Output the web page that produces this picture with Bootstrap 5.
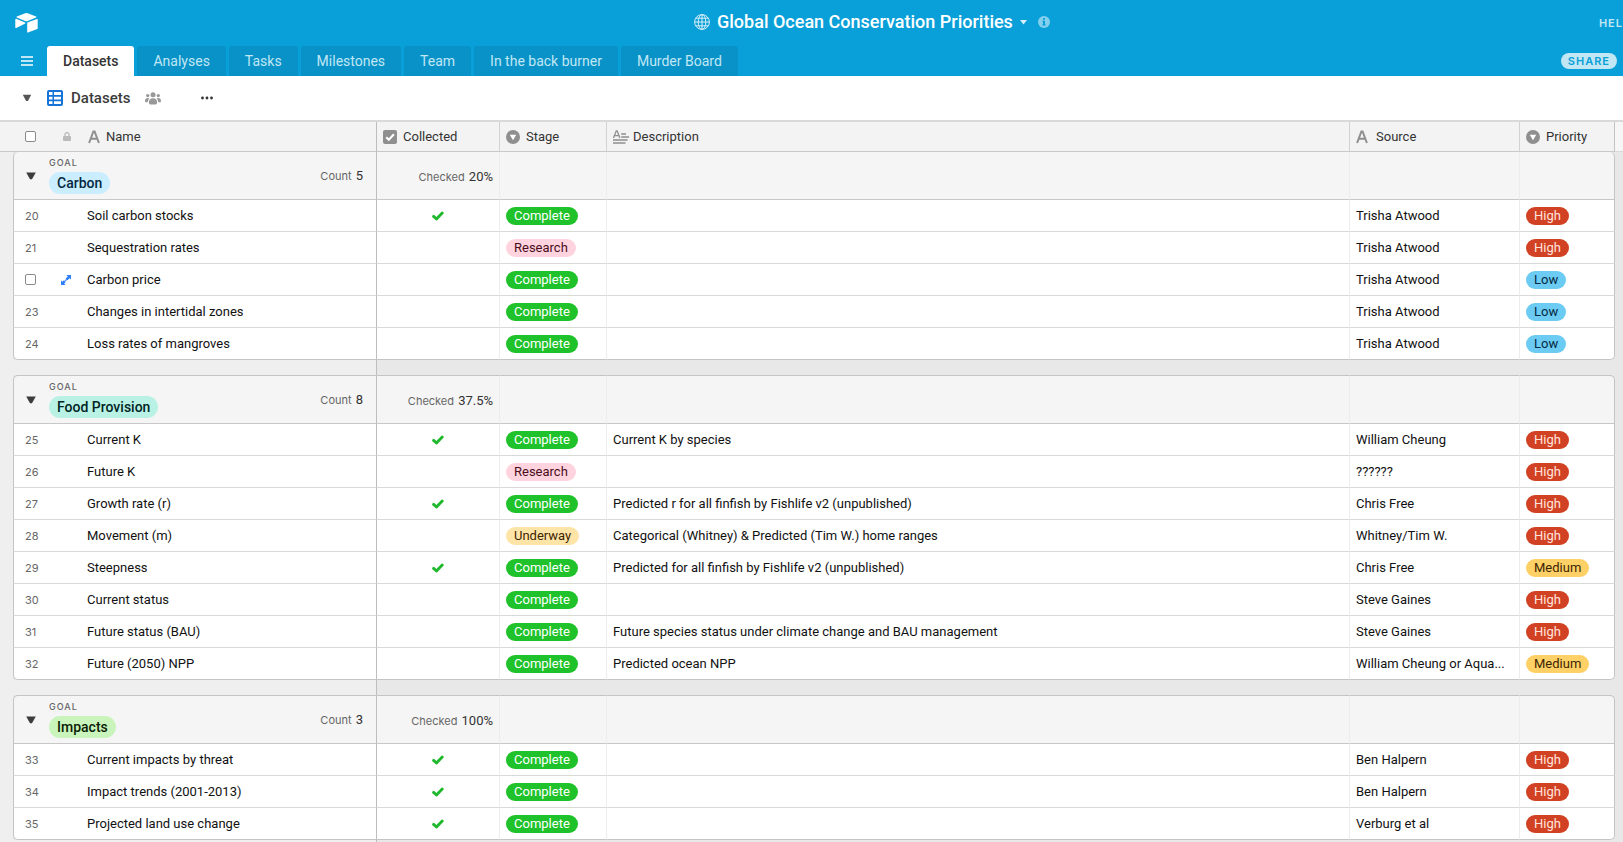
<!DOCTYPE html>
<html lang="en">
<head>
<meta charset="utf-8">
<meta name="viewport" content="width=device-width, initial-scale=1">
<title>Global Ocean Conservation Priorities</title>
<link href="https://cdn.jsdelivr.net/npm/bootstrap@5.3.0/dist/css/bootstrap.min.css" rel="stylesheet">
<style>
  body { font-family: Roboto, "Liberation Sans", sans-serif; font-size: 13px; line-height: 18px; color: #111; background: #e8e8e8; }
  svg { display: block; flex: none; }
  button { border: 0; background: none; padding: 0; color: inherit; font: inherit; }

  .topbar { background: #099fd8; color: #fff; }
  .title-row { height: 46px; }
  .title-row .base-title { font-size: 18px; line-height: 24px; font-weight: 500; }
  .base-name { padding-left: 107px; padding-bottom: 2px; gap: 7px; }
  .caps { font-family: Inter, "Liberation Sans", sans-serif; font-size: 11px; line-height: 16px; font-weight: 600; letter-spacing: 1px; }
  .soft { color: #c1e7f5; }
  .tab-row { height: 30px; padding-left: 21px; padding-right: 6px; }
  .tab-row .nav { gap: 3px; margin-left: 14px; }
  .tab-row .nav-link { height: 30px; padding: 4px 16px; font-size: 14px; line-height: 22px; color: #c1e7f5; background: #0892c7; border-radius: 3px 3px 0 0; white-space: nowrap; }
  .tab-row .nav-link.active { color: #333; background: #fff; font-weight: 500; }
  .share { background: #c1e7f5; color: #099fd8; padding: 0 7px; }

  .viewbar { height: 44px; padding: 0 22px; background: #fff; color: #333; }
  .view-name { font-size: 15px; font-weight: 500; color: #3c3c3c; margin: 0 15px 0 8px; }

  .grid-table { width: 100%; table-layout: fixed; border-collapse: separate; border-spacing: 0; border-top: 2px solid #d9d9d9; }
  .grid-table th, .grid-table td { padding: 0 6px; overflow: hidden; white-space: nowrap; text-overflow: ellipsis; vertical-align: middle; font-weight: 400; border-right: 1px solid #ededed; border-bottom: 1px solid #d9d9d9; background: #fff; }
  .grid-table thead th { height: 30px; background: #f3f3f3; border-right-color: #d0d3d3; border-bottom-color: #c8c8c8; color: #333; }
  .grid-table thead th.flat, .grid-table thead th.pad { border-right: 0; }
  .field { display: flex; align-items: center; gap: 6px; }
  .grid-table .pad { padding: 0; border: 0; background: #e8e8e8; }
  .grid-table tbody .pad:first-child { background: #efefef; }
  .grid-table thead .pad { border-bottom: 1px solid #c8c8c8; background: #f3f3f3; }
  .grid-table thead .pad:last-child { background: #f6f6f6; border-bottom-color: #d9d9d9; }
  .grid-table tbody th { height: 32px; text-align: left; padding-left: 0; border-right-color: #bdbdbd; }
  .grid-table tbody .num { padding: 0 0 0 11px; color: #666; font-family: Inter, "Liberation Sans", sans-serif; font-size: 11px; border-left: 1px solid #c4c4c4; border-right: 0; }
  .grid-table thead .locked { border-right-color: #bdbdbd; }
  .grid-table .edge { border-right-color: #c4c4c4; }
  .group-head th, .group-head td { height: 48px !important; background: #f5f5f5 !important; border-bottom-color: #c8c8c8 !important; }
  .group-head .pad:last-child { background: #e8e8e8 !important; border: 0 !important; }
  .group-head .pad:first-child { background: #efefef !important; border: 0 !important; }
  .group-head .group-cell { padding: 1px 13px 0 12px; border-left: 1px solid #c4c4c4; }
  .group-head td.text-end { padding-top: 3px; }
  .grid-table .ruled th:not(.pad), .grid-table .ruled td:not(.pad) { height: 49px !important; border-top: 1px solid #c4c4c4; }
  .ruled .group-cell, .first-head .group-cell { border-top-left-radius: 5px; }
  .ruled .edge, .first-head .edge { border-top-right-radius: 5px; }
  .group-end th:not(.pad), .group-end td:not(.pad) { border-bottom-color: #c4c4c4 !important; }
  .group-end .num { border-bottom-left-radius: 5px; }
  .group-end .edge { border-bottom-right-radius: 5px; }
  .grid-table .gap-row td { height: 15px; padding: 0; border: 0; background: #e8e8e8; }
  .grid-table .gap-row td:first-child { background: #efefef; border-right: 1px solid #bdbdbd; }
  .goal { font-family: Inter, "Liberation Sans", sans-serif; font-size: 9px; line-height: 10px; font-weight: 500; letter-spacing: 1px; color: #666; margin-bottom: 4px; }
  .goal-box { margin-left: 13px; }
  .goal-pill { font-size: 14px; line-height: 22px; font-weight: 500; padding: 0 8px; border-radius: 11px; }
  .stat { font-family: Inter, "Liberation Sans", sans-serif; font-size: 11px; color: #666; }
  .stat b { font-family: Roboto, "Liberation Sans", sans-serif; font-size: 13px; font-weight: 400; color: #333; margin-left: 1px; }
  .pill { display: block; width: fit-content; height: 18px; line-height: 18px; padding: 0 8px; border-radius: 9px; }
  .complete { background: #20c22c; color: #fff; }
  .research { background: #ffd4de; color: #4c0c1c; }
  .underway { background: #ffe4a8; color: #3b2501; }
  .high { background: #d14123; color: #ffe5de; }
  .low { background: #6bcbf2; color: #04283f; }
  .medium { background: #ffd066; color: #3b2501; }
  .box { appearance: none; display: block; flex: none; margin: 0; width: 11px; height: 11px; border: 1px solid #8a8a8a; border-radius: 2px; background: #fff; }
</style>
</head>
<body class="vh-100 overflow-hidden d-flex flex-column">

<!-- shared icons -->
<svg width="0" height="0" class="position-absolute" aria-hidden="true">
  <symbol id="check" viewBox="0 0 12 10"><path d="M1.6 5.4 4.5 8 10.2 2" fill="none" stroke="#20b92c" stroke-width="2.9" stroke-linejoin="round" stroke-linecap="round"/></symbol>
  <symbol id="caret" viewBox="0 0 10 8"><path d="M.2.5h9.600L6 7.200H4z" fill="#3c3c3c"/></symbol>
  <symbol id="letter" viewBox="0 0 12 14"><path d="M1.1 13 5.4 1.4h1.2L10.9 13M2.8 8.8h6.4" fill="none" stroke="#8f8f8f" stroke-width="2"/></symbol>
  <symbol id="select" viewBox="0 0 14 14"><circle cx="7" cy="7" r="7" fill="#8f8f8f"/><path d="M3.8 4.8h6.4L7 10.2z" fill="#fff"/></symbol>
</svg>

<header class="topbar flex-shrink-0">
  <div class="title-row d-flex align-items-center">
    <a href="#" aria-label="Home" style="margin-left:15px">
      <svg width="23" height="20" viewBox="0 0 23 20" fill="#fff"><path d="M10.2.3a3.4 3.4 0 0 1 2.5 0l8.4 3.3c.5.2.5.8 0 1l-8.3 3.3a3.700 3.700 0 0 1-2.700 0L1.800 4.600c-.5-.2-.5-.8 0-1z"/><path d="M12.200 10.200v8.900c0 .4.400.7.800.5l9.300-3.600c.3-.1.400-.3.400-.5V6.500c0-.4-.4-.7-.8-.5l-9.300 3.600c-.2.100-.4.300-.4.600z"/><path d="M10.100 10.600 7.400 12l-6.200 3C.8 15.200.3 14.900.3 14.500V6.400c0-.5.500-.8.900-.6l8.800 3.600c.5.200.6.900.1 1.200z"/></svg>
    </a>
    <div class="base-name flex-grow-1 d-flex justify-content-center align-items-center">
      <svg width="16" height="16" viewBox="0 0 16 16" fill="none" stroke="#d6effa" stroke-width="1"><circle cx="8" cy="8" r="7.400"/><ellipse cx="8" cy="8" rx="3.800" ry="7.400"/><path d="M8 .6v14.800M.6 8h14.800M1.800 4.200h12.400M1.800 11.800h12.400"/></svg>
      <h1 class="base-title m-0">Global Ocean Conservation Priorities</h1>
      <button type="button" aria-label="Base menu"><svg width="7" height="5" viewBox="0 0 7 5"><path d="M0 0h7L3.500 4.500z" fill="#d6effa"/></svg></button>
      <button type="button" aria-label="Base information"><svg class="ms-1" width="12" height="12" viewBox="0 0 12 12"><circle cx="6" cy="6" r="6" fill="#84cfec"/><path d="M5 2h2v1.700H5zM4.500 4.800H7v3.600h.7v1.100H4.400V8.400H5V5.900h-.5z" fill="#099fd8"/></svg></button>
    </div>
    <a href="#" class="caps soft text-decoration-none">HEL</a>
  </div>
  <div class="tab-row d-flex align-items-center">
    <button type="button" aria-label="All tables"><svg width="12" height="10" viewBox="0 0 12 10"><path d="M0 1h12M0 5h12M0 9h12" stroke="#c1e7f5" stroke-width="2"/></svg></button>
    <nav class="nav flex-nowrap" aria-label="Tables">
      <a class="nav-link active" href="#" aria-current="page">Datasets</a>
      <a class="nav-link" href="#">Analyses</a>
      <a class="nav-link" href="#">Tasks</a>
      <a class="nav-link" href="#">Milestones</a>
      <a class="nav-link" href="#">Team</a>
      <a class="nav-link" href="#">In the back burner</a>
      <a class="nav-link" href="#">Murder Board</a>
    </nav>
    <button type="button" class="share caps rounded-pill ms-auto">SHARE</button>
  </div>
</header>

<div class="viewbar flex-shrink-0 d-flex align-items-center">
  <button type="button" aria-label="Toggle views"><svg width="10" height="8" viewBox="0 0 10 8"><path d="M.8.700h8.400L5.900 7H4.100z" fill="#555"/></svg></button>
  <svg width="16" height="16" viewBox="0 0 16 16" style="margin-left:15px"><rect width="16" height="16" rx="2" fill="#1573d8"/><path d="M2 2h3.500v3H2zM7 2h7v3H7zM2 6.700h3.500v2.900H2zM7 6.700h7v2.900H7zM2 11.200h3.500v2.800H2zM7 11.200h7v2.800H7z" fill="#fff"/></svg>
  <h2 class="view-name mb-0">Datasets</h2>
  <svg width="16" height="13" viewBox="0 0 16 13" fill="#999"><circle cx="8" cy="2.800" r="2.500"/><circle cx="2.700" cy="3.600" r="1.700"/><circle cx="13.300" cy="3.600" r="1.700"/><path d="M3.900 10.300C3.900 7.600 5.600 6.200 8 6.200s4.100 1.400 4.100 4.100c0 1.300-.5 2.200-1.300 2.200H5.200c-.8 0-1.300-.9-1.300-2.200zM0 8.800c0-1.800 1-2.800 2.700-2.800.8 0 1.400.2 1.800.6-1 .9-1.600 2.100-1.700 3.700H1c-.7 0-1-.6-1-1.500zM16 8.800c0-1.800-1-2.800-2.700-2.800-.8 0-1.400.2-1.800.6 1 .9 1.600 2.100 1.700 3.700H15c.7 0 1-.6 1-1.500z"/></svg>
  <button type="button" aria-label="More options" style="margin-left:40px"><svg width="12" height="4" viewBox="0 0 12 4" fill="#333"><circle cx="1.500" cy="2" r="1.400"/><circle cx="6" cy="2" r="1.400"/><circle cx="10.500" cy="2" r="1.400"/></svg></button>
</div>

<main class="flex-grow-1 overflow-hidden">
<table class="grid-table">
  <colgroup><col style="width:13px"><col style="width:74px"><col style="width:290px"><col style="width:123px"><col style="width:107px"><col><col style="width:170px"><col style="width:95px"><col style="width:8px"></colgroup>
  <thead>
    <tr>
      <th class="pad"></th>
      <th class="flat ps-0"><div class="d-flex align-items-center" style="padding-left:12px"><input class="box" type="checkbox" aria-label="Select all"><svg width="8" height="9" viewBox="0 0 8 9" style="margin-left:27px"><rect y="4" width="8" height="5" rx="1" fill="#bbb"/><path d="M2 4V2.600a2 2 0 0 1 4 0V4" fill="none" stroke="#bbb" stroke-width="1.300"/></svg></div></th>
      <th class="locked ps-0" scope="col"><div class="field" style="padding-left:1px"><svg width="12" height="14"><use href="#letter"/></svg>Name</div></th>
      <th scope="col"><div class="field"><svg width="14" height="14" viewBox="0 0 14 14"><rect width="14" height="14" rx="2" fill="#8f8f8f"/><path d="M3.200 7.200 5.800 9.700 10.900 4.200" fill="none" stroke="#fff" stroke-width="2"/></svg>Collected</div></th>
      <th scope="col"><div class="field"><svg width="14" height="14"><use href="#select"/></svg>Stage</div></th>
      <th scope="col"><div class="field gap-1"><svg width="16" height="14" viewBox="0 0 16 14" fill="none" stroke="#8f8f8f"><path d="M.5 8 3.300.8h.8L6.900 8M1.500 5.600h4.400" stroke-width="1.300"/><path d="M8.200 4H13M8.200 7H16M0 10h14.500M0 13h12.500" stroke-width="1.600"/></svg>Description</div></th>
      <th scope="col"><div class="field gap-2"><svg width="12" height="14"><use href="#letter"/></svg>Source</div></th>
      <th class="edge" scope="col"><div class="field"><svg width="14" height="14"><use href="#select"/></svg>Priority</div></th>
      <th class="pad"></th>
    </tr>
  </thead>

  <tbody>
    <tr class="group-head first-head">
      <td class="pad"></td>
      <th class="group-cell" colspan="2" scope="rowgroup"><div class="d-flex align-items-center"><button type="button" aria-label="Collapse Carbon"><svg width="10" height="8"><use href="#caret"/></svg></button><div class="goal-box d-flex flex-column align-items-start"><span class="goal">GOAL</span><span class="goal-pill" style="background:#caedff;color:#04283f">Carbon</span></div><span class="stat ms-auto">Count <b>5</b></span></div></th>
      <td class="text-end"><span class="stat">Checked <b>20%</b></span></td><td></td><td></td><td></td><td class="edge"></td><td class="pad"></td>
    </tr>
    <tr><td class="pad"></td><td class="num">20</td><th scope="row">Soil carbon stocks</th><td><svg class="mx-auto" width="12" height="10" role="img" aria-label="Collected"><use href="#check"/></svg></td><td><span class="pill complete">Complete</span></td><td></td><td>Trisha Atwood</td><td class="edge"><span class="pill high">High</span></td><td class="pad"></td></tr>
    <tr><td class="pad"></td><td class="num">21</td><th scope="row">Sequestration rates</th><td></td><td><span class="pill research">Research</span></td><td></td><td>Trisha Atwood</td><td class="edge"><span class="pill high">High</span></td><td class="pad"></td></tr>
    <tr><td class="pad"></td><td class="num"><div class="d-flex align-items-center"><input class="box" type="checkbox" aria-label="Select Carbon price"><button type="button" aria-label="Expand record" style="margin-left:25px"><svg width="10" height="10" viewBox="0 0 10 10" fill="#2d7ff9"><path d="M5.500 0H10v4.500L8.600 3.200 6.500 5.300 4.700 3.500 6.800 1.400zM4.500 10H0V5.500l1.400 1.300 1.500-1.500 1.800 1.800-1.500 1.500z"/><path d="m3.500 5.500 2-2 1 1-2 2z" opacity=".8"/></svg></button></div></td><th scope="row">Carbon price</th><td></td><td><span class="pill complete">Complete</span></td><td></td><td>Trisha Atwood</td><td class="edge"><span class="pill low">Low</span></td><td class="pad"></td></tr>
    <tr><td class="pad"></td><td class="num">23</td><th scope="row">Changes in intertidal zones</th><td></td><td><span class="pill complete">Complete</span></td><td></td><td>Trisha Atwood</td><td class="edge"><span class="pill low">Low</span></td><td class="pad"></td></tr>
    <tr class="group-end"><td class="pad"></td><td class="num">24</td><th scope="row">Loss rates of mangroves</th><td></td><td><span class="pill complete">Complete</span></td><td></td><td>Trisha Atwood</td><td class="edge"><span class="pill low">Low</span></td><td class="pad"></td></tr>
    <tr class="gap-row"><td colspan="3"></td><td colspan="6"></td></tr>
  </tbody>

  <tbody>
    <tr class="group-head ruled">
      <td class="pad"></td>
      <th class="group-cell" colspan="2" scope="rowgroup"><div class="d-flex align-items-center"><button type="button" aria-label="Collapse Food Provision"><svg width="10" height="8"><use href="#caret"/></svg></button><div class="goal-box d-flex flex-column align-items-start"><span class="goal">GOAL</span><span class="goal-pill" style="background:#b9f2e5;color:#012524">Food Provision</span></div><span class="stat ms-auto">Count <b>8</b></span></div></th>
      <td class="text-end"><span class="stat">Checked <b>37.5%</b></span></td><td></td><td></td><td></td><td class="edge"></td><td class="pad"></td>
    </tr>
    <tr><td class="pad"></td><td class="num">25</td><th scope="row">Current K</th><td><svg class="mx-auto" width="12" height="10" role="img" aria-label="Collected"><use href="#check"/></svg></td><td><span class="pill complete">Complete</span></td><td>Current K by species</td><td>William Cheung</td><td class="edge"><span class="pill high">High</span></td><td class="pad"></td></tr>
    <tr><td class="pad"></td><td class="num">26</td><th scope="row">Future K</th><td></td><td><span class="pill research">Research</span></td><td></td><td>??????</td><td class="edge"><span class="pill high">High</span></td><td class="pad"></td></tr>
    <tr><td class="pad"></td><td class="num">27</td><th scope="row">Growth rate (r)</th><td><svg class="mx-auto" width="12" height="10" role="img" aria-label="Collected"><use href="#check"/></svg></td><td><span class="pill complete">Complete</span></td><td>Predicted r for all finfish by Fishlife v2 (unpublished)</td><td>Chris Free</td><td class="edge"><span class="pill high">High</span></td><td class="pad"></td></tr>
    <tr><td class="pad"></td><td class="num">28</td><th scope="row">Movement (m)</th><td></td><td><span class="pill underway">Underway</span></td><td>Categorical (Whitney) &amp; Predicted (Tim W.) home ranges</td><td>Whitney/Tim W.</td><td class="edge"><span class="pill high">High</span></td><td class="pad"></td></tr>
    <tr><td class="pad"></td><td class="num">29</td><th scope="row">Steepness</th><td><svg class="mx-auto" width="12" height="10" role="img" aria-label="Collected"><use href="#check"/></svg></td><td><span class="pill complete">Complete</span></td><td>Predicted for all finfish by Fishlife v2 (unpublished)</td><td>Chris Free</td><td class="edge"><span class="pill medium">Medium</span></td><td class="pad"></td></tr>
    <tr><td class="pad"></td><td class="num">30</td><th scope="row">Current status</th><td></td><td><span class="pill complete">Complete</span></td><td></td><td>Steve Gaines</td><td class="edge"><span class="pill high">High</span></td><td class="pad"></td></tr>
    <tr><td class="pad"></td><td class="num">31</td><th scope="row">Future status (BAU)</th><td></td><td><span class="pill complete">Complete</span></td><td>Future species status under climate change and BAU management</td><td>Steve Gaines</td><td class="edge"><span class="pill high">High</span></td><td class="pad"></td></tr>
    <tr class="group-end"><td class="pad"></td><td class="num">32</td><th scope="row">Future (2050) NPP</th><td></td><td><span class="pill complete">Complete</span></td><td>Predicted ocean NPP</td><td>William Cheung or Aqua...</td><td class="edge"><span class="pill medium">Medium</span></td><td class="pad"></td></tr>
    <tr class="gap-row"><td colspan="3"></td><td colspan="6"></td></tr>
  </tbody>

  <tbody>
    <tr class="group-head ruled">
      <td class="pad"></td>
      <th class="group-cell" colspan="2" scope="rowgroup"><div class="d-flex align-items-center"><button type="button" aria-label="Collapse Impacts"><svg width="10" height="8"><use href="#caret"/></svg></button><div class="goal-box d-flex flex-column align-items-start"><span class="goal">GOAL</span><span class="goal-pill" style="background:#c9f5bd;color:#0b1d05">Impacts</span></div><span class="stat ms-auto">Count <b>3</b></span></div></th>
      <td class="text-end"><span class="stat">Checked <b>100%</b></span></td><td></td><td></td><td></td><td class="edge"></td><td class="pad"></td>
    </tr>
    <tr><td class="pad"></td><td class="num">33</td><th scope="row">Current impacts by threat</th><td><svg class="mx-auto" width="12" height="10" role="img" aria-label="Collected"><use href="#check"/></svg></td><td><span class="pill complete">Complete</span></td><td></td><td>Ben Halpern</td><td class="edge"><span class="pill high">High</span></td><td class="pad"></td></tr>
    <tr><td class="pad"></td><td class="num">34</td><th scope="row">Impact trends (2001-2013)</th><td><svg class="mx-auto" width="12" height="10" role="img" aria-label="Collected"><use href="#check"/></svg></td><td><span class="pill complete">Complete</span></td><td></td><td>Ben Halpern</td><td class="edge"><span class="pill high">High</span></td><td class="pad"></td></tr>
    <tr class="group-end"><td class="pad"></td><td class="num">35</td><th scope="row">Projected land use change</th><td><svg class="mx-auto" width="12" height="10" role="img" aria-label="Collected"><use href="#check"/></svg></td><td><span class="pill complete">Complete</span></td><td></td><td>Verburg et al</td><td class="edge"><span class="pill high">High</span></td><td class="pad"></td></tr>
    <tr class="gap-row"><td colspan="3"></td><td colspan="6"></td></tr>
  </tbody>
</table>
</main>

<script src="https://cdn.jsdelivr.net/npm/bootstrap@5.3.0/dist/js/bootstrap.bundle.min.js"></script>
</body>
</html>
